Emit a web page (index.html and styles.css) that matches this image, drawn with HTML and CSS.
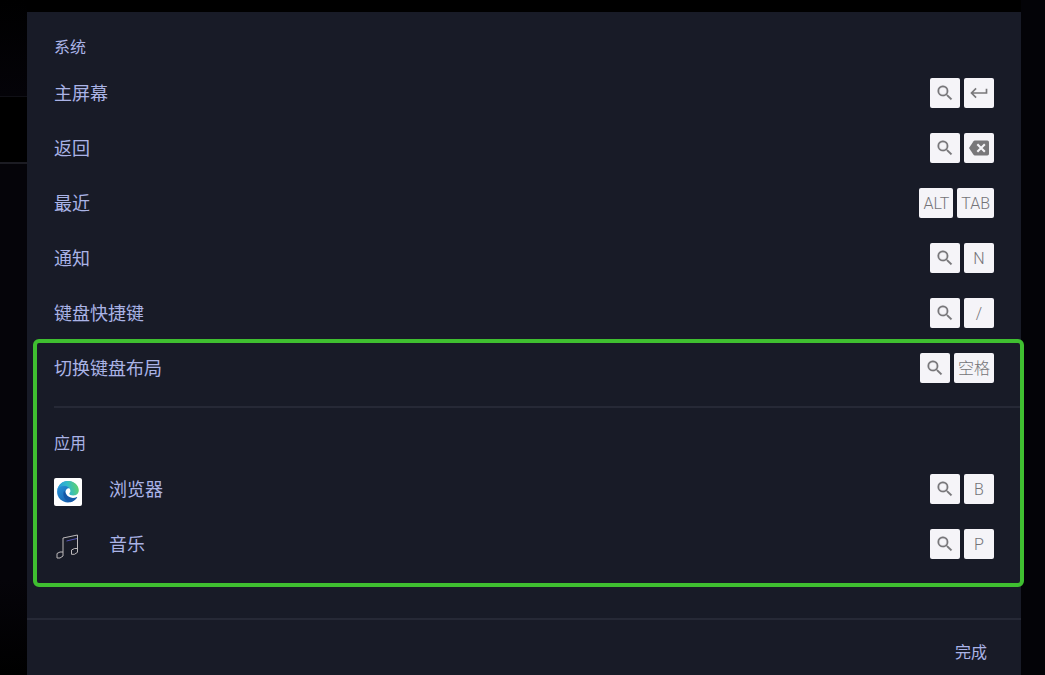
FILE: index.html
```
<!DOCTYPE html>
<html lang="zh-CN">

<head>
  <meta charset="utf-8">
  <meta name="viewport" content="width=device-width">
  <title>键盘快捷键</title>
  <link rel="stylesheet" href="styles.css">
</head>
<body>
  <svg class="defs" aria-hidden="true">
    <symbol id="search" viewBox="0 0 24 24">
      <path fill="currentColor" stroke="currentColor" stroke-width=".2" d="M15.5 14h-.79l-.28-.27A6.47 6.47 0 0 0 16 9.5 6.5 6.5 0 1 0 9.5 16c1.61 0 3.09-.59 4.23-1.57l.27.28v.79l5 4.99L20.49 19l-4.99-5zm-6 0a4.5 4.5 0 1 1 0-9 4.5 4.5 0 0 1 0 9z"/>
    </symbol>
  </svg>

  <main class="dialog" role="dialog" aria-label="键盘快捷键">
    <div class="content">
      <h2>系统</h2>
      <ul>
        <li>
          <span class="label">主屏幕</span>
          <kbd><svg><use href="#search"/></svg></kbd>
          <kbd><svg viewBox="0 0 24 24"><path fill="none" stroke="currentColor" stroke-width="2" d="M21 7v5H3.500M8.500 6.500 3 12 8.500 17.500"/></svg></kbd>
        </li>
        <li>
          <span class="label">返回</span>
          <kbd><svg><use href="#search"/></svg></kbd>
          <kbd><svg viewBox="0 0 24 24"><path fill="currentColor" d="M22 3H7c-.69 0-1.230.350-1.590.880L0 12l5.410 8.110c.36.53.9.89 1.590.89h15a2 2 0 0 0 2-2V5a2 2 0 0 0-2-2z"/><path fill="none" stroke="#f5f4f8" stroke-width="2.500" d="m10 7.500 9 9m0-9-9 9"/></svg></kbd>
        </li>
        <li>
          <span class="label">最近</span>
          <kbd>ALT</kbd>
          <kbd>TAB</kbd>
        </li>
        <li>
          <span class="label">通知</span>
          <kbd><svg><use href="#search"/></svg></kbd>
          <kbd>N</kbd>
        </li>
        <li>
          <span class="label">键盘快捷键</span>
          <kbd><svg><use href="#search"/></svg></kbd>
          <kbd>/</kbd>
        </li>
      </ul>

      <div class="marked">
        <ul>
          <li>
            <span class="label">切换键盘布局</span>
            <kbd><svg><use href="#search"/></svg></kbd>
            <kbd>空格</kbd>
          </li>
        </ul>
        <hr>
        <h2>应用</h2>
        <ul>
          <li>
            <svg class="app" viewBox="0 0 28 28">
              <defs>
                <linearGradient id="top" x1="0" y1=".6" x2="1" y2=".4">
                  <stop offset="0" stop-color="#2795dc"/>
                  <stop offset=".5" stop-color="#31b9cb"/>
                  <stop offset="1" stop-color="#60d36b"/>
                </linearGradient>
                <linearGradient id="low" x1="0" y1="0" x2="1" y2="1">
                  <stop offset="0" stop-color="#2a9be0"/>
                  <stop offset="1" stop-color="#124f9e"/>
                </linearGradient>
              </defs>
              <rect width="28" height="28" rx="2" fill="#fff"/>
              <circle cx="13.800" cy="13.700" r="10.700" fill="url(#low)"/>
              <path fill="#1459a8" d="M10 13c-2 5 1 10 6.500 11.200 3-.8 5.500-2.700 6.800-5.200L16 17z"/>
              <path fill="#fff" d="M14.500 10.300c-2.700.7-3.700 3.200-2.300 5.800 2 3.700 6.800 4.800 10.800 2.800L25.500 20V11z"/>
              <path fill="url(#top)" d="M3.200 12.800C3.700 7 8.500 2.900 14 2.900c6.200 0 10.800 4.400 10.800 9.400 0 3.500-2.600 5.200-5.600 5.200-2.600 0-4-.9-4-1.700 0-.6 1.200-1 1.200-2.800 0-3-2.800-5-6.400-5-3.500 0-6 2-6.800 4.800z"/>
            </svg>
            <span class="label">浏览器</span>
            <kbd><svg><use href="#search"/></svg></kbd>
            <kbd>B</kbd>
          </li>
          <li>
            <svg class="app" viewBox="0 0 28 28">
              <g fill="none" stroke="#bdbabb">
                <path d="M9 20V5L23.500 2v15"/>
                <path d="M9 19H6l-3 1.500V25h3l3-2v-3M23.500 15.500h-3l-3 1.500v4.300h3l3-2v-3"/>
              </g>
              <path fill="none" stroke="#5657b5" d="m12.500 8 10.500-2.500"/>
            </svg>
            <span class="label">音乐</span>
            <kbd><svg><use href="#search"/></svg></kbd>
            <kbd>P</kbd>
          </li>
        </ul>
      </div>
    </div>

    <footer>
      <button type="button">完成</button>
    </footer>
  </main>
</body>
</html>
```

FILE: styles.css
```
* { box-sizing: border-box; }
body { display: flex; min-height: 100vh; margin: 0; padding: 12px 24px 0 27px; color: #aab3e6; font-family: Roboto, "Noto Sans CJK SC", sans-serif; background: linear-gradient(#000 0, #040308 96px, #101016 96px, #101016 97px, #000 97px, #000 162px, #1c1c23 162px, #1c1c23 164px, #050409 164px, #050409 580px, #000 100%) left / 27px 100% no-repeat #030307; }
.defs { position: absolute; width: 0; height: 0; }

.dialog { display: flex; flex-direction: column; flex: 1; background: #181b27; box-shadow: 0 -12px #000; }
.content { flex: 1; padding-top: 16px; }
h2 { margin: 0; padding: 8px 27px 6px; font-size: 16px; line-height: 24px; font-weight: 400; }
ul { margin: 0; padding: 0 27px; list-style: none; }
li { display: flex; align-items: center; gap: 4px; height: 55px; }
.label { flex: 1; font-size: 18px; line-height: 28px; }
hr { height: 2px; margin: 10px 0 16px 27px; border: 0; background: #262936; }

kbd { display: flex; align-items: center; justify-content: center; min-width: 30px; height: 30px; margin-bottom: 2px; padding: 2px 4px 0; border-radius: 2px; color: #747377; background: #f5f4f8; font-family: Roboto, "Noto Sans CJK SC", sans-serif; font-size: 16px; font-weight: 300; line-height: 20px; }
kbd svg { flex: none; width: 20px; height: 20px; margin-bottom: 2px; color: #78777a; }
.app { width: 28px; height: 28px; margin: 4px 23px 0 0; }

/* frame drawn over the shortcuts that are being pointed out */
.marked { position: relative; }
.marked::after { content: ""; position: absolute; inset: -2px -3px -15px 6px; border: 4px solid #3fbf30; border-radius: 6px; pointer-events: none; }

footer { display: flex; justify-content: flex-end; height: 57px; padding: 14px 18px 8px; border-top: 2px solid #262936; }
button { padding: 0 16px; border: 0; color: inherit; background: none; font: inherit; font-size: 16px; }
```
